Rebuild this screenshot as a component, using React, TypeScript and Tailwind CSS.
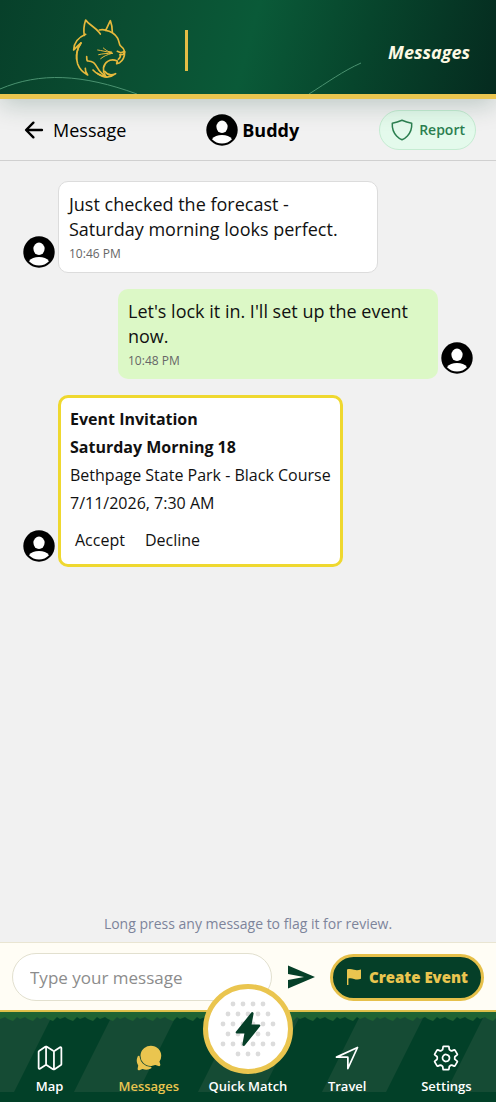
import React, { useState } from 'react';
import {
  IoArrowBack,
  IoChatbubbles,
  IoFlash,
  IoMapOutline,
  IoNavigateOutline,
  IoSettingsOutline,
  IoShieldOutline,
} from 'react-icons/io5';

const tabs = [
  { label: 'Map', icon: IoMapOutline },
  { label: 'Messages', icon: IoChatbubbles },
  { label: 'Quick Match', icon: null },
  { label: 'Travel', icon: IoNavigateOutline },
  { label: 'Settings', icon: IoSettingsOutline },
];

// Dimple rows of the golf ball button: y, first x, count
const dimples = [
  [20, 30, 4],
  [30, 25, 5],
  [40, 20, 6],
  [50, 25, 5],
  [60, 20, 6],
  [70, 35, 3],
];

function Avatar() {
  return (
    <svg viewBox="0 0 32 32" className="size-8 shrink-0" aria-hidden="true">
      <circle cx="16" cy="16" r="15.7" fill="#000" />
      <ellipse cx="16" cy="12.8" rx="5.6" ry="6.2" fill="#fff" />
      <path d="M6 25.2c2-3 5.7-4.3 10-4.3s8 1.3 10 4.3c-2.6 2.8-6.1 4.4-10 4.4s-7.4-1.6-10-4.4z" fill="#fff" />
    </svg>
  );
}

function BobcatLogo() {
  return (
    <svg viewBox="0 0 240 240" className="size-20" fill="none" strokeLinecap="round" strokeLinejoin="round" aria-label="Bobcat">
      <g stroke="#e6b93c" strokeWidth="5">
        <path d="M73 76C70 60 72 45 77 30c9 14 27 20 40 37l4 5" />
        <path d="M118 60c5-1 12-2 19 1 4-8 9-19 14-29 4 10 6 22 6 35" />
        <path d="M137 61c13 2 27 10 35 22 6 9 4 17 9 24 7 5 11 11 13 18l-4 8-9 1" />
        <path d="M77 73C58 81 42 94 41 120c7-7 11-12 22-21-14 17-16 44-10 63 5 14 15 25 30 33-7-9-8-13-7-20" />
        <path d="M63 99C54 113 47 130 50 148" />
        <path d="M194 126c0 12-5 25-15 32l-9 3 2-8c-9-4-20-5-29 1-14 9-17 28-7 43" />
        <path d="M180 134c3 5 1 9-5 14" />
        <path d="M172 124l10 4 9-3" />
        <path d="M80 140c0 6 0 9 2 13 17-1 23 8 30 20 7 13 15 20 27 27-16-2-30-9-40-20" />
        <path d="M112 190c19 14 39 14 55 1-13 6-25 4-33-7" />
      </g>
      <g stroke="#e6b93c" strokeWidth="3">
        <path d="M113 120c12 2 24 4 44 10M116 134c12-3 25-4 41-4M122 146c10-8 19-12 34-16M130 114c7 6 12 10 26 15M147 125l8 1" />
      </g>
    </svg>
  );
}

function FlagIcon() {
  return (
    <svg viewBox="0 0 16 18" className="h-[18px] w-4" aria-hidden="true">
      <path d="M1 1.5C3 .7 5.5.9 8 1.7s4.500.5 7-.2v9.300c-2.500.9-4.700.8-7 .1s-4-.8-5.600-.3V17H1z" fill="#eac54f" />
    </svg>
  );
}

function SendIcon() {
  return (
    <svg viewBox="0 0 32 32" className="size-8" fill="currentColor" aria-hidden="true">
      <path d="M3 4.500L30 16 3 27.500V19l16-3L3 13z" />
    </svg>
  );
}

function TurfBackground() {
  return (
    <div className="absolute inset-0 overflow-hidden">
      <svg className="size-full" aria-hidden="true">
        <defs>
          <pattern id="stripes" width="124" height="92" patternUnits="userSpaceOnUse">
            <rect width="124" height="92" fill="#024028" />
            <path d="M-10 0H54L14 80H-50zM114 0H178L138 80H74z" fill="#154b34" />
          </pattern>
          <pattern id="grass" width="20" height="10" patternUnits="userSpaceOnUse">
            <path d="M0 0H20V7L17 5L13 9L8 7L5 5L0 7z" fill="#1f6332" />
          </pattern>
        </defs>
        <rect width="100%" height="100%" fill="url(#stripes)" />
        <rect width="100%" height="10" fill="url(#grass)" />
      </svg>
    </div>
  );
}

function Bubble({ text, time, mine }: { text: string; time: string; mine?: boolean }) {
  return (
    <div className={`flex items-end gap-[3px] ${mine ? 'flex-row-reverse' : ''}`}>
      <div className="pb-[5px]"><Avatar /></div>
      <div
        className={`w-80 rounded-[10px] px-[10px] pt-[10px] pb-2 ${
          mine ? 'bg-[#dcf8c6]' : 'bg-white border border-[#dcdcdc]'
        }`}
      >
        <p className="text-lg leading-[25px] text-[#111]">{text}</p>
        <p className="pt-[2px] text-xs leading-5 text-[#666]">{time}</p>
      </div>
    </div>
  );
}

export default function App() {
  const [draft, setDraft] = useState('');

  return (
    <div className="min-h-screen flex flex-col bg-[#f1f1f1] font-['Open_Sans','Noto_Sans',sans-serif] text-black">
      {/* Brand header */}
      <header className="relative z-10 h-[99px] shrink-0 flex items-center justify-between border-b-[5px] border-[#eac54f] bg-[linear-gradient(105deg,#07402a_0%,#0a4d31_25%,#0a5a38_50%,#07452c_72%,#052b1f_100%)] pr-[26px] pl-[60px] shadow-[0_6px_24px_rgba(4,60,40,0.22)]">
        <svg viewBox="0 0 496 94" preserveAspectRatio="none" className="absolute inset-0 size-full" fill="none" stroke="#4a9270" aria-hidden="true">
          <path d="M0 89C40 72 82 74 137 94M309 94C328 82 343 71 361 63" />
        </svg>
        <div className="relative flex items-center gap-[45px] pt-[6px]">
          <BobcatLogo />
          <div className="h-[41px] w-[3px] bg-[#e3bd45]" />
        </div>
        <h1 className="relative pt-[10px] text-lg font-bold italic text-[#fdf9e3]">Messages</h1>
      </header>

      {/* Conversation bar */}
      <div className="h-[62px] shrink-0 flex items-center justify-between border-b border-[#d0d0d0] pr-5 pl-[21px]">
        <button className="flex items-center gap-[6px] text-lg">
          <IoArrowBack className="size-[26px]" />
          Message
        </button>
        <div className="flex items-center gap-1 text-lg font-bold">
          <Avatar />
          Buddy
        </div>
        <button className="flex h-10 items-center gap-[5px] rounded-full border border-[#c5ecd2] bg-[#e4faec] px-[10px] text-sm font-semibold text-[#2c7f50]">
          <IoShieldOutline className="size-6" />
          Report
        </button>
      </div>

      {/* Thread */}
      <main className="flex flex-1 flex-col gap-4 px-[23px] pt-5">
        <Bubble text="Just checked the forecast - Saturday morning looks perfect." time="10:46 PM" />
        <Bubble text="Let's lock it in. I'll set up the event now." time="10:48 PM" mine />

        <div className="flex items-end gap-[3px]">
          <div className="pb-[5px]"><Avatar /></div>
          <div className="rounded-[10px] border-[3px] border-[#efd82f] bg-white px-[9px] pt-[7px] pb-2 text-base leading-7 text-[#111]">
            <h2 className="font-bold">Event Invitation</h2>
            <h3 className="font-bold">Saturday Morning 18</h3>
            <p>Bethpage State Park - Black Course</p>
            <p>7/11/2026, 7:30 AM</p>
            <div className="flex gap-[10px] pt-[7px]">
              <button className="px-[5px] py-[2px]">Accept</button>
              <button className="px-[5px] py-[2px]">Decline</button>
            </div>
          </div>
        </div>

        <p className="mt-auto pb-2 text-center text-sm text-[#7d849b]">Long press any message to flag it for review.</p>
      </main>

      {/* Composer */}
      <form
        className="flex shrink-0 items-center border-t border-[#e9e5d2] bg-[#fffdf5] pt-[10px] pr-3 pb-[9px] pl-3"
        onSubmit={(e) => e.preventDefault()}
      >
        <input
          value={draft}
          onChange={(e) => setDraft(e.target.value)}
          placeholder="Type your message"
          aria-label="Type your message"
          className="h-12 min-w-0 flex-1 rounded-full border border-[#e2e0cf] bg-white px-[17px] text-[17px] placeholder:text-[#8c8c8c]"
        />
        <button aria-label="Send" className="mx-[13px] text-[#053f28]">
          <SendIcon />
        </button>
        <button className="flex h-[47px] items-center gap-[7px] rounded-full border-[3px] border-[#e6c04a] bg-[#053f28] px-[13px] text-[15px] font-extrabold text-[#eac54f]">
          <FlagIcon />
          Create Event
        </button>
      </form>

      {/* Tab bar */}
      <nav className="relative h-[92px] shrink-0 border-t-2 border-[#dfc04a] bg-[#013a24]">
        <TurfBackground />
        <div className="relative grid h-full grid-cols-5">
          {tabs.map(({ label, icon: Icon }) => (
            <button
              key={label}
              className={`flex flex-col items-center justify-end gap-1 pb-[6px] text-[13px] leading-5 font-semibold whitespace-nowrap ${
                label === 'Messages' ? 'text-[#eac54f]' : 'text-white'
              }`}
            >
              {Icon && <Icon className="size-7" />}
              {label}
            </button>
          ))}
        </div>
        <button
          aria-label="Quick Match"
          className="absolute -top-7 left-1/2 flex size-[90px] -translate-x-1/2 items-center justify-center rounded-full border-[5px] border-[#eac54f] bg-white"
        >
          <svg viewBox="0 0 90 90" className="absolute -inset-[5px] size-[90px]" fill="#dcdcdc" aria-hidden="true">
            {dimples.map(([y, x, count]) =>
              Array.from({ length: count }, (_, i) => <circle key={`${y}-${i}`} cx={x + i * 10} cy={y} r="2.4" />)
            )}
          </svg>
          <IoFlash className="relative size-9 text-[#053f28]" />
        </button>
      </nav>
    </div>
  );
}
